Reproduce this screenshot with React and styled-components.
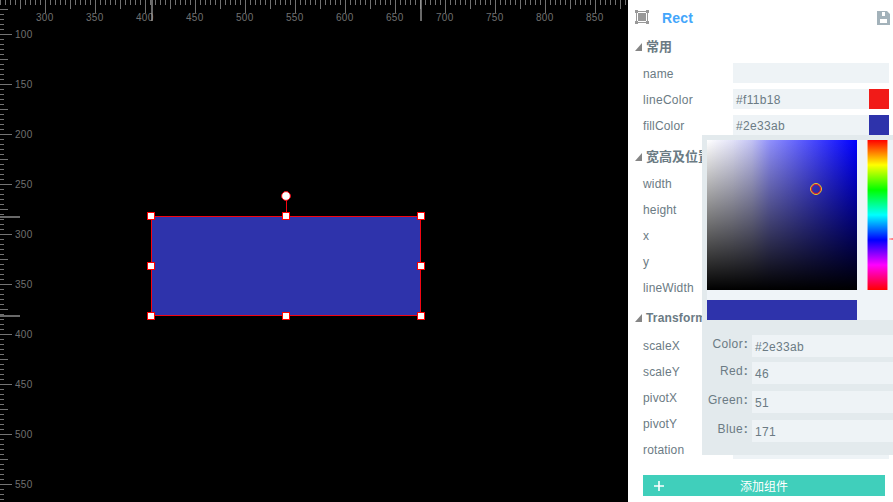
import React from "react";
import styled, { createGlobalStyle } from "styled-components";

const Global = createGlobalStyle`
  * { box-sizing: border-box; }
  html, body { margin: 0; background: #fff; }
  body { overflow: hidden; font: 12px/26px "Liberation Sans", Arial, "Noto Sans CJK SC", sans-serif; color: #6b7b84; }
`;
const Editor = styled.div`
  display: flex;
  width: 893px;
  height: 502px;
  overflow: hidden;
`;
const Stage = styled.svg`
  display: block;
  flex: 0 0 628px;
  height: 502px;
  background: #000;
  shape-rendering: crispEdges;
`;
const RulerText = styled.text`
  font: 10px "Liberation Sans", Arial, sans-serif;
  letter-spacing: 0.3px;
  fill: #707070;
`;
const Inspector = styled.aside`
  position: relative;
  flex: 1;
  min-width: 0;
  background: #fff;
`;
const Header = styled.header`
  display: flex;
  align-items: center;
  height: 36px;
  padding: 0 3px 0 7px;
`;
const Title = styled.h1`
  flex: 1;
  margin: 0 0 0 13px;
  font-size: 14px;
  line-height: 36px;
  letter-spacing: 0.2px;
  color: #43a6fb;
`;
const SectionTitle = styled.h2`
  display: flex;
  align-items: center;
  gap: 4px;
  height: ${(p) => p.$height}px;
  margin: 0;
  padding: ${(p) => p.$drop || 0}px 0 ${(p) => p.$lift || 0}px 7px;
  font-size: ${(p) => (p.$latin ? 12 : 13)}px;
  letter-spacing: ${(p) => (p.$latin ? 0.15 : 0)}px;
  line-height: 20px;
  white-space: nowrap;
`;
const Field = styled.div`
  display: flex;
  align-items: center;
  height: 26px;
  padding: 0 4px 0 15px;
`;
const Label = styled.label`
  width: 90px;
  padding-top: 1px;
  letter-spacing: ${(p) => p.$tracking ?? 0.15}px;
`;
const Input = styled.div`
  display: flex;
  flex: 1;
  height: 20px;
  line-height: 22px;
  padding-left: 3px;
  letter-spacing: 0.33px;
  background: #eef3f6;
`;
const Swatch = styled.span`
  width: 20px;
  height: 20px;
  margin-left: auto;
  background: ${(p) => p.$color};
`;
const AddButton = styled.button`
  display: flex;
  align-items: center;
  width: 242px;
  height: 21px;
  margin: 13px 0 0 15px;
  padding: 0 0 0 11px;
  border: 0;
  background: #40cfbb;
  color: #fff;
  font: 12px/21px "Liberation Sans", "Noto Sans CJK SC", sans-serif;
`;
const AddText = styled.span`
  margin-left: 76px;
  padding-top: 4px;
`;
const Picker = styled.section`
  position: absolute;
  left: 74px;
  top: 135px;
  width: 197px;
  height: 320px;
  padding: 5px 0 0 5px;
  background: #e3eaed;
`;
const PickerTop = styled.div`
  display: grid;
  grid-template-columns: 150px 21px;
  grid-template-rows: 150px 20px;
  gap: 10px;
  height: 180px;
  background: #eff4f8;
`;
const Shade = styled.div`
  position: relative;
  background:
    linear-gradient(transparent, #000),
    linear-gradient(to right, #fff, #e2e2f8 17%, #c2c2f5 30%, #9090fc 42%, #00f);
`;
const Cursor = styled.svg`
  position: absolute;
  left: 103px;
  top: 43px;
`;
const Hue = styled.div`
  position: relative;
  border: solid rgba(255, 255, 255, 0.5);
  border-width: 0 1px;
  background: linear-gradient(#f00, #ff0 16.67%, #0f0 33.33%, #0ff 50%, #00f 66.67%, #f0f 83.33%, #f00) border-box;
`;
const HueMark = styled.span`
  position: absolute;
  left: 21px;
  top: 98px;
  width: 6px;
  height: 2px;
  background: linear-gradient(to right, #ffc3c8, #ff4d55);
`;
const Preview = styled.div`
  background: #2e33ab;
`;
const Channels = styled.div`
  display: flex;
  flex-direction: column;
  gap: 7px;
  padding-top: 15px;
`;
const Channel = styled.div`
  display: grid;
  grid-template-columns: 42px 147px;
  column-gap: 3px;
  height: 22px;

  &:first-child {
    margin-bottom: -2px;
  }
`;
const ChannelLabel = styled.span`
  text-align: right;
  line-height: 19px;
  white-space: nowrap;
  letter-spacing: 0.35px;
`;
const Colon = styled.b`
  display: inline-block;
  width: 6px;
  text-align: center;
`;
const ChannelInput = styled.span`
  height: 22px;
  padding-left: 3px;
  line-height: 24px;
  letter-spacing: 0.33px;
  background: #eef3f6;
`;

const topTicks = Array.from({ length: 126 }, (_, i) => i * 5);
const leftTicks = Array.from({ length: 99 }, (_, i) => 9 + i * 5);
const tickSize = (units, sizes) => (units % 50 === 0 ? sizes[2] : units % 25 === 0 ? sizes[1] : sizes[0]);
const handles = [[151, 216], [286, 216], [421, 216], [151, 266], [421, 266], [151, 316], [286, 316], [421, 316]];

function Canvas() {
  return (
    <Stage viewBox="0 0 628 502">
      <g fill="#727272">
        {topTicks.map((x) => <rect key={x} x={x} width="1" height={tickSize(x + 255, [5, 9, 13])} />)}
        {leftTicks.map((y) => <rect key={y} y={y} height="1" width={tickSize(y + 66, [4, 8, 12])} />)}
      </g>
      {Array.from({ length: 12 }, (_, i) => <RulerText key={i} x={36 + i * 50} y="21">{300 + i * 50}</RulerText>)}
      {Array.from({ length: 10 }, (_, i) => <RulerText key={i} x="15" y={38 + i * 50}>{100 + i * 50}</RulerText>)}
      <g fill="#aaa" fillOpacity=".62">
        <rect x="151" width="2" height="21" />
        <rect x="420" width="2" height="21" />
        <rect y="216" width="20" height="2" />
        <rect y="315" width="20" height="2" />
      </g>
      <rect x="151.5" y="216.5" width="269" height="99" fill="#2e33ab" stroke="#f50512" />
      <rect x="286" y="200" width="1" height="13" fill="#f50512" />
      <circle cx="286" cy="196" r="4.4" fill="#fff" stroke="#f50512" shapeRendering="auto" />
      {handles.map(([x, y]) => (
        <rect key={`${x}-${y}`} x={x - 3.5} y={y - 3.5} width="7" height="7" fill="#fff" stroke="#f00" />
      ))}
    </Stage>
  );
}

const HeaderIcon = styled.svg`
  margin-bottom: 2px;
`;
const RectIcon = () => (
  <HeaderIcon width="14" height="14" viewBox="0 0 14 14" fill="#999" shapeRendering="crispEdges">
    <path d="M0 0h3v3H0zM11 0h3v3h-3zM0 11h3v3H0zM11 11h3v3h-3zM3 1h8v1H3zM3 12h8v1H3zM1 3h1v8H1zM12 3h1v8h-1zM3 3h8v8H3z" />
  </HeaderIcon>
);
const SaveIcon = () => (
  <svg width="13" height="14" viewBox="0 0 13 14">
    <path fill="#a3b2ba" fillRule="evenodd" d="M0 0h10l3 3v11H0zM5 1v4h3V1zM3 8v4h7V8z" />
  </svg>
);
const Arrow = () => (
  <svg width="7" height="8" viewBox="0 0 7 8"><path fill="#858585" d="M7 0v8H0z" /></svg>
);
const Plus = () => (
  <svg width="10" height="10" viewBox="0 0 10 10"><path fill="#fff" d="M4.2 0h1.6v4.2H10v1.6H5.8V10H4.2V5.8H0V4.2h4.2z" /></svg>
);

function Property({ name, value, color, tracking }) {
  return (
    <Field>
      <Label $tracking={tracking}>{name}</Label>
      <Input>{value}{color && <Swatch $color={color} />}</Input>
    </Field>
  );
}

const channels = [["Color", "#2e33ab"], ["Red", "46"], ["Green", "51"], ["Blue", "171"]];

function ColorPicker() {
  return (
    <Picker>
      <PickerTop>
        <Shade>
          <Cursor width="12" height="12" viewBox="0 0 12 12" fill="none">
            <circle cx="6" cy="6" r="5.4" stroke="#ffe21a" />
            <circle cx="6" cy="6" r="4.5" stroke="#f01824" />
          </Cursor>
        </Shade>
        <Hue><HueMark /></Hue>
        <Preview />
      </PickerTop>
      <Channels>
        {channels.map(([name, value]) => (
          <Channel key={name}>
            <ChannelLabel>{name}<Colon>:</Colon></ChannelLabel>
            <ChannelInput>{value}</ChannelInput>
          </Channel>
        ))}
      </Channels>
    </Picker>
  );
}

export default function App() {
  return (
    <Editor>
      <Global />
      <Canvas />
      <Inspector>
        <Header><RectIcon /><Title>Rect</Title><SaveIcon /></Header>
        <SectionTitle $height={24} $lift={3}><Arrow />常用</SectionTitle>
        <Property name="name" />
        <Property name="lineColor" value="#f11b18" color="#f11b18" tracking={0.3} />
        <Property name="fillColor" value="#2e33ab" color="#2e33ab" />
        <SectionTitle $height={32} $drop={5}><Arrow />宽高及位置</SectionTitle>
        {["width", "height", "x", "y", "lineWidth"].map((n) => <Property key={n} name={n} />)}
        <SectionTitle $height={32} $drop={4} $latin><Arrow />Transform</SectionTitle>
        {["scaleX", "scaleY", "pivotX", "pivotY", "rotation"].map((n) => <Property key={n} name={n} />)}
        <AddButton><Plus /><AddText>添加组件</AddText></AddButton>
        <ColorPicker />
      </Inspector>
    </Editor>
  );
}
